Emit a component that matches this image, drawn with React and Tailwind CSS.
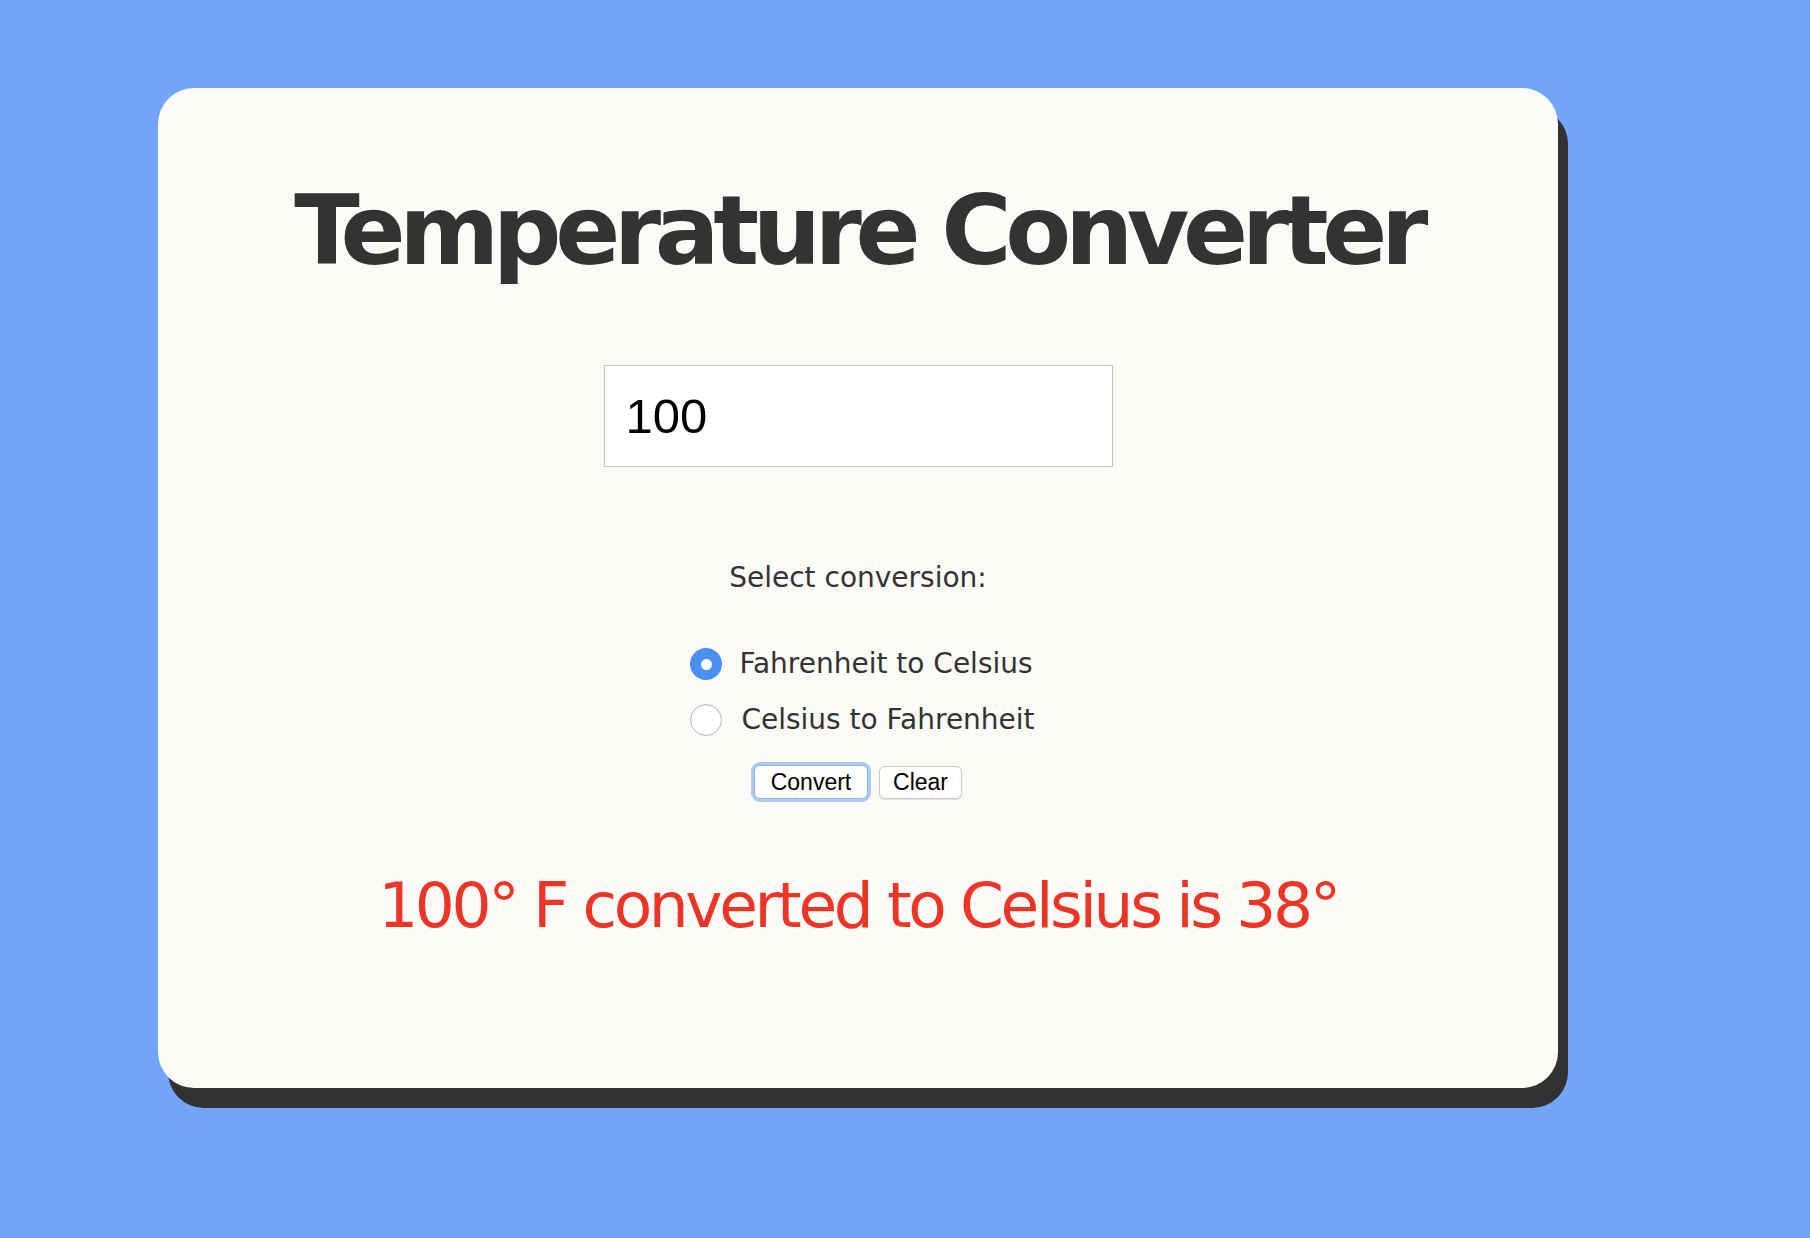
import { useState } from 'react';

const tahoma = { fontFamily: '"DejaVu Sans", Verdana, sans-serif' };
const helvetica = { fontFamily: '"Liberation Sans", Arial, sans-serif' };

function RadioOption({ label, checked, onChange, shift }) {
  return (
    <label className="flex cursor-pointer items-center gap-[17px]">
      <span
        className={
          checked
            ? 'flex h-[32px] w-[32px] items-center justify-center rounded-full bg-[#4a90f0]'
            : 'flex h-[32px] w-[32px] items-center justify-center rounded-full border border-[#b9b9b9] bg-white shadow-[inset_0_1px_2px_rgba(0,0,0,0.08)]'
        }
      >
        {checked ? <span className="h-[11px] w-[11px] rounded-full bg-white" /> : null}
      </span>
      <input type="radio" className="hidden" checked={checked} onChange={onChange} />
      <span className={shift ? 'ml-[2px] text-[28px] leading-[40px] text-[#333]' : 'text-[28px] leading-[40px] text-[#333]'}>
        {label}
      </span>
    </label>
  );
}

export default function App() {
  const [value, setValue] = useState('100');
  const [mode, setMode] = useState('f2c');

  return (
    <div className="min-h-[1238px] w-full bg-[#72a4f7] pt-[88px] pl-[158px]" style={tahoma}>
      <div className="flex h-[1000px] w-[1400px] flex-col items-center rounded-[36px] bg-[#fcfbf7] shadow-[10px_20px_0_#323230]">
        <h1 className="mt-[95px] text-[96px] font-bold leading-none text-[#333] tracking-[-6.4px]">
          Temperature Converter
        </h1>

        <input
          type="text"
          value={value}
          onChange={(e) => setValue(e.target.value)}
          className="mt-[86px] h-[102px] w-[509px] border border-[#c2c2c2] bg-white pl-[21px] text-[49px] text-black outline-none"
          style={helvetica}
        />

        <p className="mt-[91px] text-[28px] leading-[40px] text-[#333]">Select conversion:</p>

        <div className="mt-[46px] ml-[9px] flex flex-col gap-[16px]">
          <RadioOption label="Fahrenheit to Celsius" checked={mode === 'f2c'} onChange={() => setMode('f2c')} />
          <RadioOption label="Celsius to Fahrenheit" shift checked={mode === 'c2f'} onChange={() => setMode('c2f')} />
        </div>

        <div className="mt-[25px] flex items-center gap-[11px] text-[23px] text-black" style={helvetica}>
          <button className="h-[34px] w-[114px] rounded-[6px] border border-[#8fb6ee] bg-white leading-none shadow-[0_0_0_3px_rgba(110,160,240,0.55)]">
            Convert
          </button>
          <button className="h-[33px] w-[83px] rounded-[6px] border border-[#c8c8c8] bg-white leading-none shadow-[0_1px_1px_rgba(0,0,0,0.12)]">
            Clear
          </button>
        </div>

        <p className="mt-[75px] text-[63px] leading-none text-[#ec3527] tracking-[-3.4px]">
          100° F converted to Celsius is 38°
        </p>
      </div>
    </div>
  );
}
